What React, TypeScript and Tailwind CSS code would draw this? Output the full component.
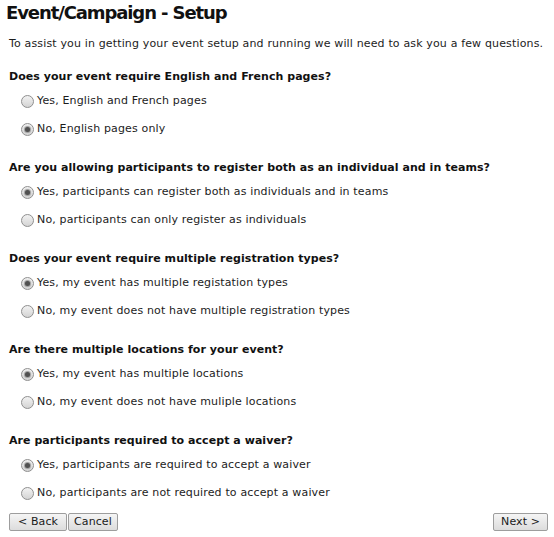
import React from 'react';

const questions = [
  {
    title: 'Does your event require English and French pages?',
    options: ['Yes, English and French pages', 'No, English pages only'],
    checked: 1,
  },
  {
    title: 'Are you allowing participants to register both as an individual and in teams?',
    options: ['Yes, participants can register both as individuals and in teams', 'No, participants can only register as individuals'],
    checked: 0,
  },
  {
    title: 'Does your event require multiple registration types?',
    options: ['Yes, my event has multiple registation types', 'No, my event does not have multiple registration types'],
    checked: 0,
  },
  {
    title: 'Are there multiple locations for your event?',
    options: ['Yes, my event has multiple locations', 'No, my event does not have muliple locations'],
    checked: 0,
  },
  {
    title: 'Are participants required to accept a waiver?',
    options: ['Yes, participants are required to accept a waiver', 'No, participants are not required to accept a waiver'],
    checked: 0,
  },
];

function Radio({ checked }: { checked: boolean }) {
  return (
    <span className="relative flex h-[13px] w-[13px] shrink-0 items-center justify-center rounded-full border border-[#8f8f8f] bg-gradient-to-b from-[#f2f2f2] to-[#d4d4d4]">
      {checked && <span className="h-[5px] w-[5px] rounded-full bg-[#505050] shadow-[0_0_1px_1px_#9a9a9a]" />}
    </span>
  );
}

function Button({ children, className = 'px-[8px]' }: { children: React.ReactNode; className?: string }) {
  return (
    <button className={`h-[18px] rounded-[2px] border border-[#9d9d9d] bg-gradient-to-b from-[#f5f5f5] to-[#dcdcdc] text-[11px] leading-[16px] tracking-[0.1px] text-[#1a1a1a] ${className}`}>
      {children}
    </button>
  );
}

export default function App() {
  return (
    <div className="h-[537px] w-[554px] bg-white pl-[9px] pr-[6px] text-[11px] tracking-[0.15px] text-[#1c1c1c] [font-family:'DejaVu_Sans',Verdana,sans-serif]">
      <h1 className="-ml-[3px] h-[26px] text-[18px] font-bold leading-[26px] tracking-[-1.1px] text-[#111]">Event/Campaign - Setup</h1>
      <p className="mt-[9px] leading-[18px]">
        To assist you in getting your event setup and running we will need to ask you a few questions.
      </p>

      <div className="mt-[15px] flex flex-col gap-[16px]">
        {questions.map((q) => (
          <div key={q.title}>
            <div className="mb-[1px] font-bold leading-[18px] tracking-[0.05px] text-[#111]">{q.title}</div>
            {q.options.map((opt, i) => (
              <label key={opt} className="flex h-[28px] items-center gap-[3px] pl-[12px]">
                <Radio checked={i === q.checked} />
                <span>{opt}</span>
              </label>
            ))}
          </div>
        ))}
      </div>

      <div className="mt-[6px] flex items-center justify-between">
        <div className="flex gap-[1px]">
          <Button>&lt; Back</Button>
          <Button className="px-[5px]">Cancel</Button>
        </div>
        <Button className="px-[7px]">Next &gt;</Button>
      </div>
    </div>
  );
}
